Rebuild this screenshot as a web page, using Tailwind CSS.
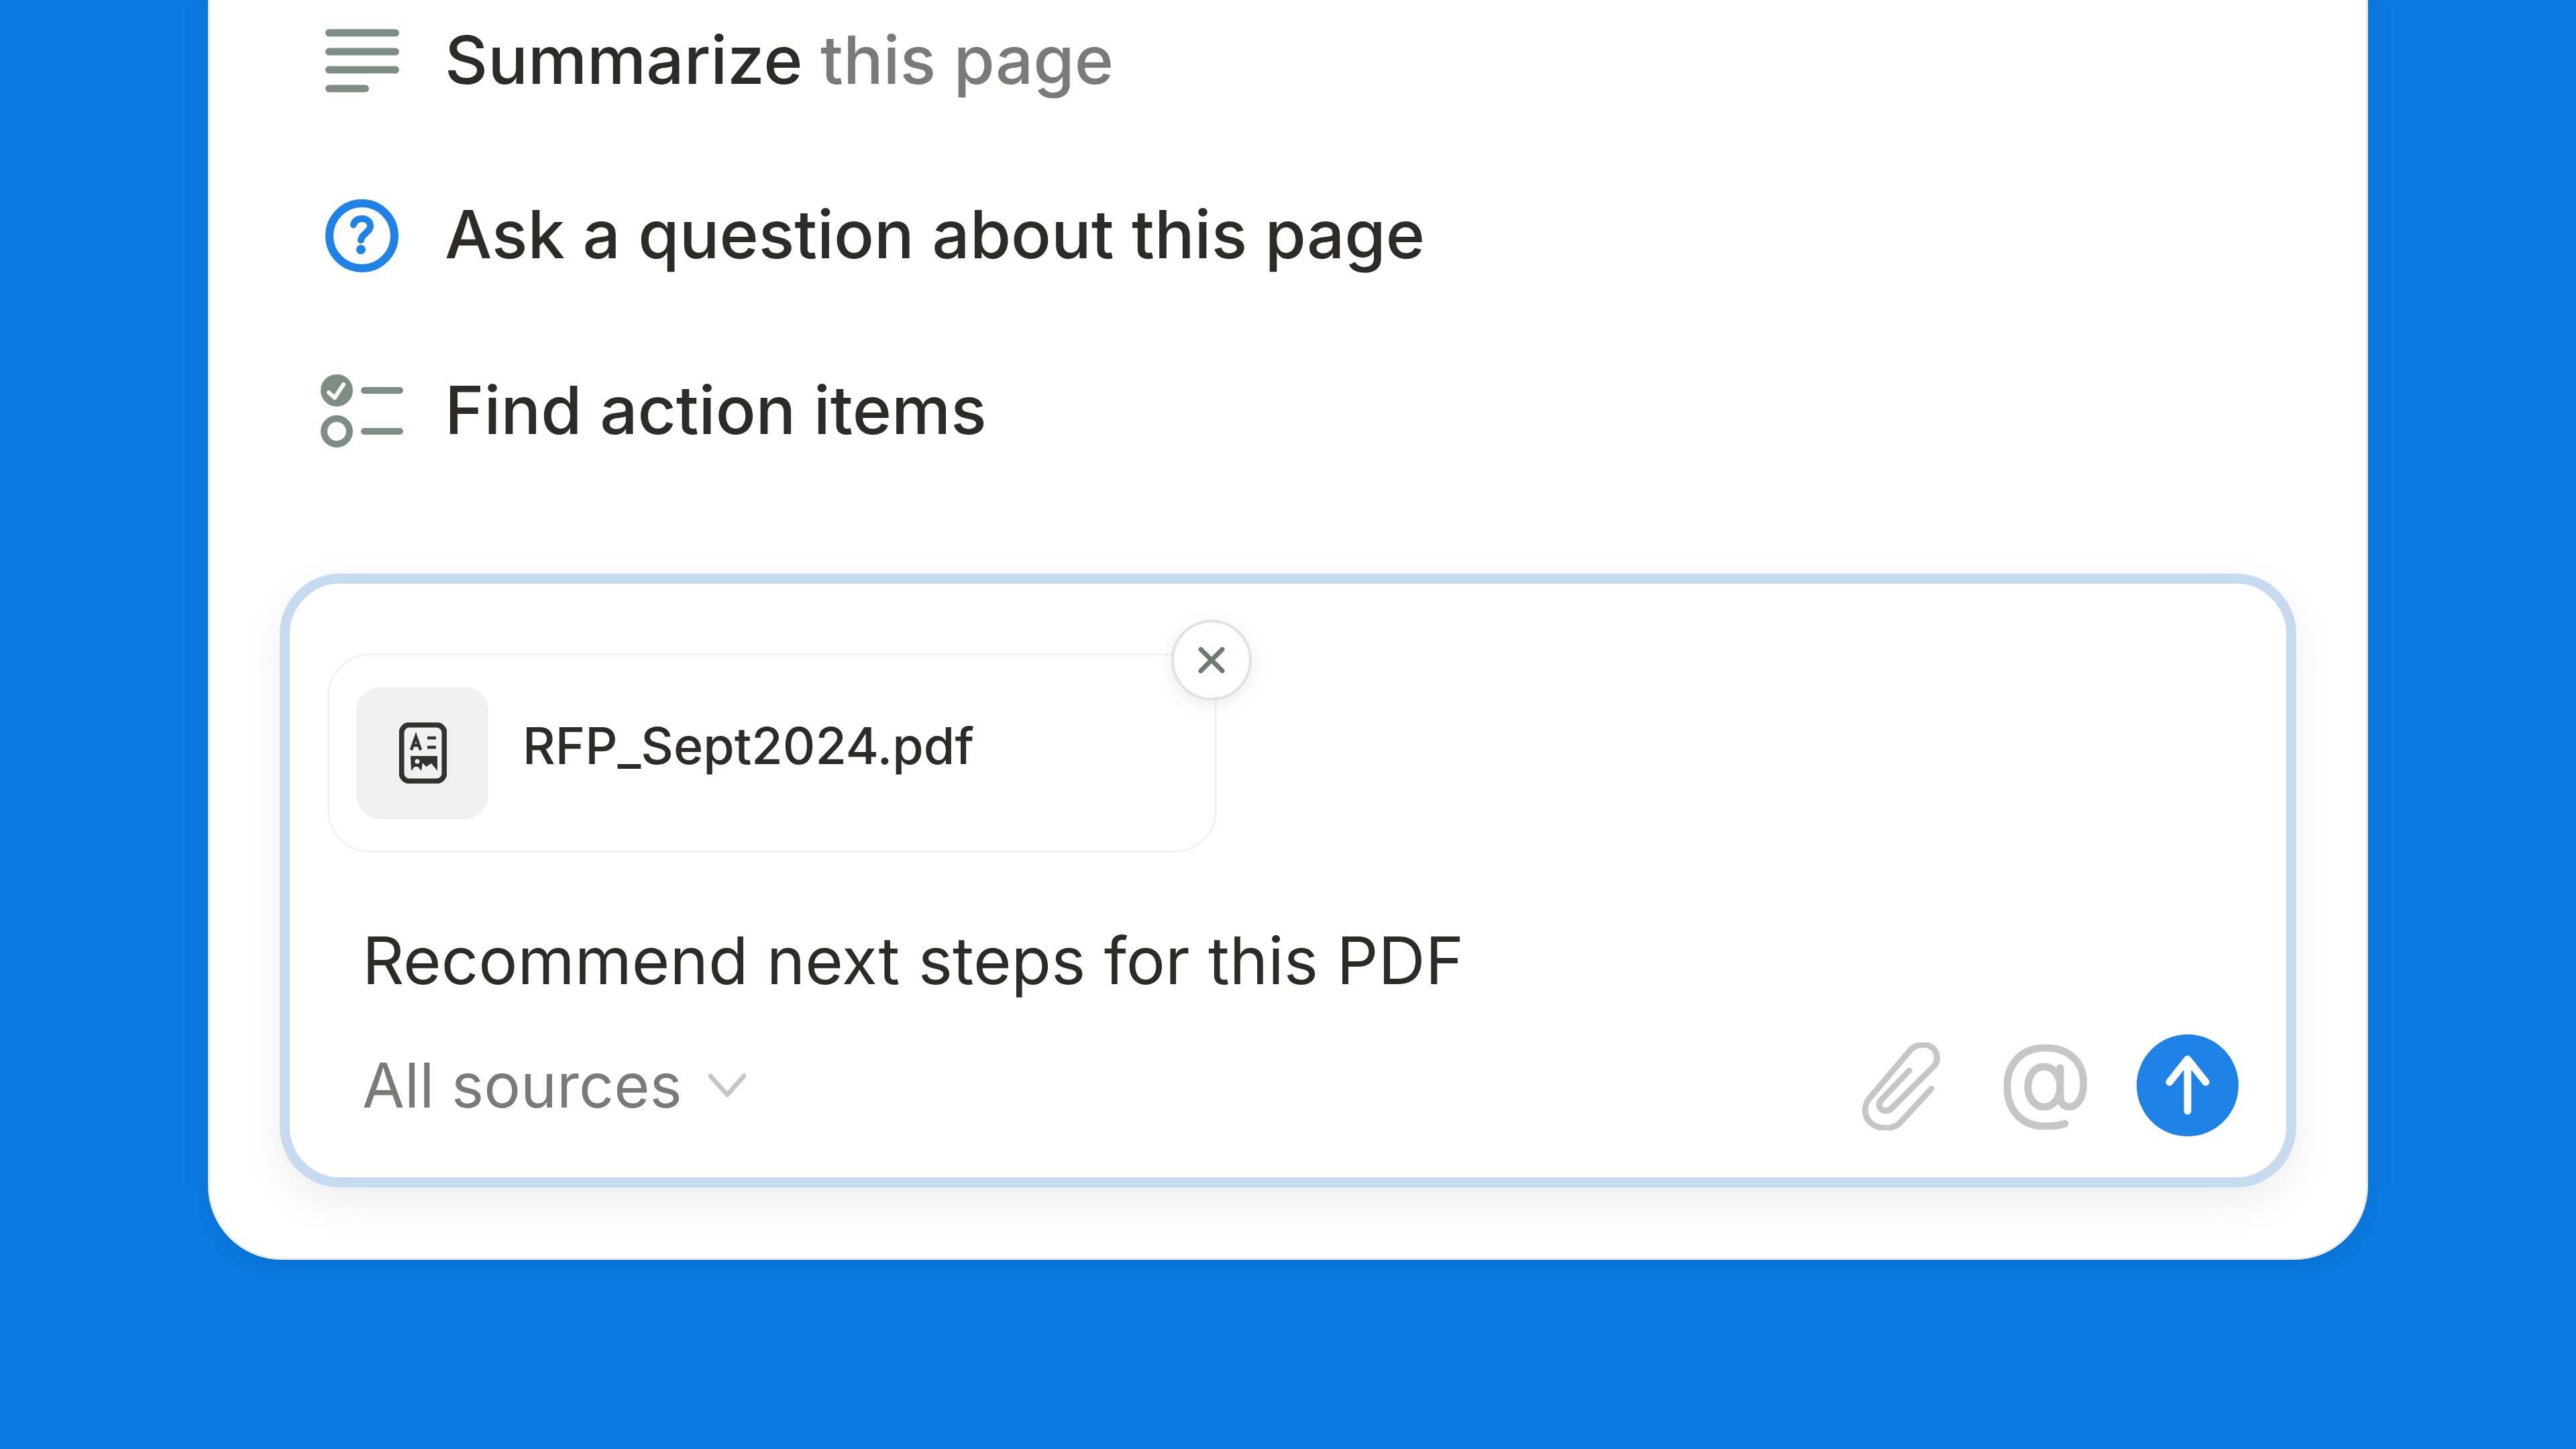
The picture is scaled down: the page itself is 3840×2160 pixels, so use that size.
<!DOCTYPE html>
<html lang="en">

<head>
    <meta charset="UTF-8">
    <title>AI prompt</title>
    <script src="https://cdn.jsdelivr.net/npm/@tailwindcss/browser@4"></script>
</head>

<body class="w-[3840px] h-[2160px] overflow-hidden bg-[#0a7ae2] font-[Inter] text-[#2c2b28]">
    <!-- Card runs off the top of the shot -->
    <div class="ml-[310px] -mt-[40px] w-[3220px] h-[1918px] bg-white rounded-b-[110px] border-x-[3px] border-b-[3px] border-[#ececec] shadow-[0_12px_40px_rgba(0,0,0,0.08)]">

        <div class="h-[260px] pl-[162px] flex items-center">
            <svg class="w-[130px] h-[130px] shrink-0" viewBox="0 0 130 130" fill="none" stroke="#7e8e84" stroke-width="11" stroke-linecap="round">
                <path d="M15.500 24H114.500M15.500 52H114.500M15.500 79H114.500M15.500 107H69.500" />
            </svg>
            <p class="ml-[58px] text-[99.300px] leading-none font-medium">Summarize <span class="text-[#7a7a78]">this page</span></p>
        </div>

        <div class="h-[260px] pl-[162px] flex items-center">
            <svg class="w-[130px] h-[130px] shrink-0" viewBox="0 0 130 130" fill="none" stroke="#1f82e6" stroke-linecap="round">
                <circle cx="64.500" cy="66.500" r="48.500" stroke-width="12" />
                <path d="M52 50C54 43 59 41 65 41C73 41 77 46 77 52C77 59 70 61 65 68L63 73" stroke-width="10" />
                <circle cx="63" cy="87" r="7" fill="#1f82e6" stroke="none" />
            </svg>
            <p class="ml-[58px] text-[99.300px] leading-none font-medium">Ask a question about this page</p>
        </div>

        <div class="h-[260px] pl-[162px] flex items-center">
            <svg class="w-[130px] h-[130px] shrink-0" viewBox="0 0 130 130" fill="none" stroke="#7e8e84" stroke-linecap="round">
                <circle cx="27" cy="37" r="24" fill="#7e8e84" stroke="none" />
                <path d="M15 40L24 48L37 28" stroke="#fff" stroke-width="6" stroke-linejoin="round" />
                <circle cx="27" cy="98" r="19" stroke-width="10" />
                <path d="M68 37H121M68 98H121" stroke-width="10" />
            </svg>
            <p class="ml-[58px] mt-[3px] text-[99.300px] leading-none font-medium">Find action items</p>
        </div>

        <!-- Prompt box -->
        <div class="mt-[115px] ml-[104px] w-[3006px] h-[915px] rounded-[90px] border-[15px] border-[#c6daf0] bg-white shadow-[0_22px_60px_rgba(0,0,0,0.07)] pl-[56px] pt-[104px] pr-[71px] flex flex-col">
            <div class="relative w-[1326px] h-[297px] shrink-0 rounded-[64px] border-[3px] border-[#f2f2f2] pl-[40px] flex items-center">
                <div class="w-[197px] h-[197px] rounded-[36px] bg-[#f0f0f0] flex items-center justify-center shrink-0">
                    <svg class="ml-[2px] w-[71px] h-[91px]" viewBox="0 0 71 91" fill="none" stroke="#33322f">
                        <rect x="3.500" y="3.500" width="64" height="84" rx="12" stroke-width="8" />
                        <path d="M18 41L25 21L32 41M20.500 34H29.500" stroke-width="4.500" />
                        <path d="M42 23H55M42 37H55" stroke-width="4.500" />
                        <path d="M17 50H57V72L48 61L40 66L35 60L33 72L28 66H23L18 72Z" fill="#33322f" stroke="none" />
                        <circle cx="27" cy="58" r="3.500" fill="#f0f0f0" stroke="none" />
                    </svg>
                </div>
                <span class="ml-[51px] text-[75.300px] leading-none font-medium -mt-[22px]">RFP_Sept2024.pdf</span>
                <!-- close badge -->
                <button class="absolute -top-[53px] -right-[55px] w-[120px] h-[120px] rounded-full bg-white border-[4px] border-[#e2e2e2] shadow-[0_6px_24px_rgba(0,0,0,0.08)] flex items-center justify-center">
                    <svg class="w-[44px] h-[44px]" viewBox="0 0 44 44" fill="none" stroke="#6f7a73" stroke-width="7" stroke-linecap="round">
                        <path d="M6 6L38 38M38 6L6 38" />
                    </svg>
                </button>
            </div>

            <p class="ml-[52px] mt-[112px] text-[97.200px] leading-none">Recommend next steps for this PDF</p>

            <div class="ml-[52px] mt-[60px] flex items-center">
                <span class="text-[91.400px] leading-none text-[#7a7a78]">All sources</span>
                <svg class="ml-[39px] mt-[2px] w-[56px] h-[36px]" viewBox="0 0 56 36" fill="none" stroke="#c6c6c6" stroke-width="7" stroke-linecap="round" stroke-linejoin="round">
                    <path d="M3 4L28 32L53 4" />
                </svg>

                <div class="ml-auto flex items-center">
                    <svg class="mt-[4px] w-[116px] h-[131px]" viewBox="0 0 116 131" fill="none" stroke="#c6c6c6" stroke-width="9" stroke-linecap="round">
                        <path d="M103 69L57 119C47 130 25 130 13 120C2 110 2 96 10 84L72 11C82 1 98 1 106 9C113 17 113 27 108 34L44 98C38 104 30 102 27 98C24 94 25 90 28 86L70 42" />
                    </svg>
                    <svg class="ml-[95px] mt-[6px] w-[124px] h-[127px]" viewBox="0 0 124 127" fill="none" stroke="#c6c6c6" stroke-width="11" stroke-linecap="round">
                        <path d="M91 118C82 121 72 122 62 122C27 122 5 98 5 63C5 28 27 5 62 5C97 5 119 26 119 58C119 78 110 93 98 93C89 93 84 87 84 78L84 35M84 63C84 80 74 93 60 93C46 93 36 80 36 63C36 46 46 33 60 33C74 33 84 46 84 63Z" />
                    </svg>
                    <button class="ml-[74px] mt-[2px] w-[152px] h-[152px] rounded-full bg-[#1f82e6] flex items-center justify-center">
                        <svg class="w-[70px] h-[90px]" viewBox="0 0 70 90" fill="none" stroke="#fff" stroke-width="11" stroke-linecap="round" stroke-linejoin="round">
                            <path d="M35 6V83M8 40L35 6L62 40" />
                        </svg>
                    </button>
                </div>
            </div>
        </div>
    </div>
</body>

</html>
